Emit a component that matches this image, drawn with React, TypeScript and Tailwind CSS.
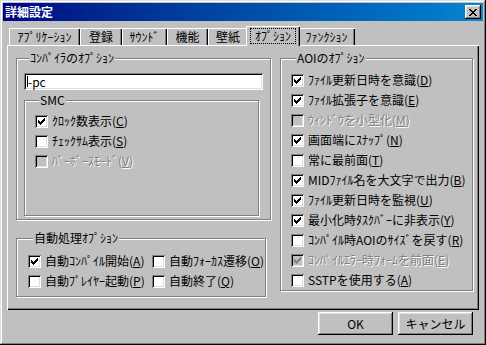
import React from "react";

function CheckMark({ color }: { color: string }) {
  const cols = [2, 3, 4, 3, 2, 1, 0];
  return (
    <svg width="7" height="7" viewBox="0 0 7 7" shapeRendering="crispEdges">
      {cols.map((y, x) => (
        <rect key={x} x={x} y={y} width="1" height="3" fill={color} />
      ))}
    </svg>
  );
}

function Box({ checked, disabled }: { checked?: boolean; disabled?: boolean }) {
  return (
    <span
      className={`shrink-0 w-[13px] h-[13px] flex items-center justify-center shadow-[inset_1px_1px_0_#808080,inset_-1px_-1px_0_#fff,inset_2px_2px_0_#000,inset_-2px_-2px_0_#dfdfdf] ${
        disabled ? "bg-[#c0c0c0]" : "bg-white"
      }`}
    >
      {checked ? <CheckMark color={disabled ? "#808080" : "#000"} /> : null}
    </span>
  );
}

function Label({ text, k, disabled }: { text: string; k: string; disabled?: boolean }) {
  return (
    <span
      className={`whitespace-nowrap ${
        disabled ? "text-[#808080] [text-shadow:1px_1px_0_#fff]" : "text-black"
      }`}
    >
      {text}(<span className="underline underline-offset-[1px]">{k}</span>)
    </span>
  );
}

function Row({
  text,
  k,
  checked,
  disabled,
}: {
  text: string;
  k: string;
  checked?: boolean;
  disabled?: boolean;
}) {
  return (
    <div className="h-[20px] flex items-center gap-[4px]">
      <Box checked={checked} disabled={disabled} />
      <Label text={text} k={k} disabled={disabled} />
    </div>
  );
}

function Tab({ label, w }: { label: string; w: string }) {
  return (
    <div
      className={`${w} h-[17px] shrink-0 flex items-center justify-center bg-[#c0c0c0] shadow-[inset_1px_1px_0_#fff,inset_-1px_0_0_#000,inset_-2px_0_0_#808080] whitespace-nowrap`}
    >
      {label}
    </div>
  );
}

export default function App() {
  return (
    <div className="w-[486px] h-[345px] bg-[#c0c0c0] p-[3px] flex flex-col shadow-[inset_-1px_-1px_0_#000,inset_1px_1px_0_#dfdfdf,inset_-2px_-2px_0_#808080,inset_2px_2px_0_#fff] font-['Noto_Sans_CJK_JP','Noto_Sans',sans-serif] text-[12px] leading-[14px] text-black overflow-hidden">
      {/* Title bar */}
      <div className="h-[18px] shrink-0 flex items-start justify-between bg-linear-to-r from-[#000080] to-[#1084d0]">
        <span className="text-white font-bold text-[12px] leading-[18px] pl-[2px]">
          詳細設定
        </span>
        <div className="mt-[2px] mr-[2px] w-[16px] h-[14px] bg-[#c0c0c0] flex items-center justify-center shadow-[inset_-1px_-1px_0_#000,inset_1px_1px_0_#fff,inset_-2px_-2px_0_#808080,inset_2px_2px_0_#dfdfdf]">
          <svg width="8" height="7" viewBox="0 0 8 7" shapeRendering="crispEdges">
            {[
              [0, 0], [1, 0], [6, 0], [7, 0],
              [1, 1], [2, 1], [5, 1], [6, 1],
              [2, 2], [3, 2], [4, 2], [5, 2],
              [3, 3], [4, 3],
              [2, 4], [3, 4], [4, 4], [5, 4],
              [1, 5], [2, 5], [5, 5], [6, 5],
              [0, 6], [1, 6], [6, 6], [7, 6],
            ].map(([x, y], i) => (
              <rect key={i} x={x} y={y} width="1" height="1" fill="#000" />
            ))}
          </svg>
        </div>
      </div>

      {/* Tabs */}
      <div className="h-[24px] shrink-0 flex items-end pl-[6px]">
        <Tab label="ｱﾌﾟﾘｹｰｼｮﾝ" w="w-[71px]" />
        <Tab label="登録" w="w-[42px]" />
        <Tab label="ｻｳﾝﾄﾞ" w="w-[45px]" />
        <Tab label="機能" w="w-[41px]" />
        <Tab label="壁紙" w="w-[40px]" />
        <div className="relative z-10 -mx-[2px] mb-[-1px] w-[54px] h-[20px] shrink-0 bg-[#c0c0c0] flex items-start justify-center pt-[2px] shadow-[inset_1px_1px_0_#fff,inset_-1px_0_0_#000,inset_-2px_0_0_#808080]">
          <span className="w-[46px] h-[16px] border border-dotted border-black flex items-center justify-center whitespace-nowrap">
            ｵﾌﾟｼｮﾝ
          </span>
        </div>
        <Tab label="ﾌｧﾝｸｼｮﾝ" w="w-[57px]" />
      </div>

      {/* Panel */}
      <div className="ml-[4px] w-[472px] h-[265px] shrink-0 flex gap-[14px] pl-[9px] pt-[6px] shadow-[inset_1px_1px_0_#fff,inset_-1px_-1px_0_#000,inset_-2px_-2px_0_#808080]">
        {/* Left column */}
        <div className="w-[250px] flex flex-col">
          <fieldset className="w-[250px] h-[169px] border border-[#808080] shadow-[inset_1px_1px_0_#fff,1px_1px_0_#fff] px-[7px]">
            <legend className="ml-[5px] px-[1px] bg-[#c0c0c0] leading-[14px] whitespace-nowrap">
              ｺﾝﾊﾟｲﾗのｵﾌﾟｼｮﾝ
            </legend>
            <div className="mt-[8px] w-[239px] h-[17px] bg-white flex items-center pl-[3px] shadow-[inset_1px_1px_0_#808080,inset_-1px_-1px_0_#fff,inset_2px_2px_0_#000,inset_-2px_-2px_0_#dfdfdf]">
              <span className="w-[1px] h-[11px] bg-black" />
              <span>-pc</span>
            </div>
            <fieldset className="mt-[3px] w-[235px] h-[123px] border border-[#808080] shadow-[inset_1px_1px_0_#fff,1px_1px_0_#fff] pl-[10px] pt-[4px]">
              <legend className="ml-[4px] px-[1px] bg-[#c0c0c0] leading-[14px]">SMC</legend>
              <Row text="ｸﾛｯｸ数表示" k="C" checked />
              <Row text="ﾁｪｯｸｻﾑ表示" k="S" />
              <Row text="ﾊﾞｰﾎﾞｰｽﾓｰﾄﾞ" k="V" disabled />
            </fieldset>
          </fieldset>

          <fieldset className="mt-[11px] w-[250px] h-[66px] border border-[#808080] shadow-[inset_1px_1px_0_#fff,1px_1px_0_#fff] pl-[11px] pt-[6px]">
            <legend className="ml-[5px] px-[1px] bg-[#c0c0c0] leading-[14px] whitespace-nowrap">
              自動処理ｵﾌﾟｼｮﾝ
            </legend>
            <div className="grid grid-cols-[124px_1fr]">
              <Row text="自動ｺﾝﾊﾟｲﾙ開始" k="A" checked />
              <Row text="自動ﾌｫｰｶｽ遷移" k="O" />
              <Row text="自動ﾌﾟﾚｲﾔｰ起動" k="P" />
              <Row text="自動終了" k="Q" />
            </div>
          </fieldset>
        </div>

        {/* Right column */}
        <fieldset className="w-[193px] h-[240px] border border-[#808080] shadow-[inset_1px_1px_0_#fff,1px_1px_0_#fff] pl-[10px] pt-[5px]">
          <legend className="ml-[5px] px-[1px] bg-[#c0c0c0] leading-[14px] whitespace-nowrap">
            AOIのｵﾌﾟｼｮﾝ
          </legend>
          <Row text="ﾌｧｲﾙ更新日時を意識" k="D" checked />
          <Row text="ﾌｧｲﾙ拡張子を意識" k="E" checked />
          <Row text="ｳｨﾝﾄﾞｳを小型化" k="M" disabled />
          <Row text="画面端にｽﾅｯﾌﾟ" k="N" checked />
          <Row text="常に最前面" k="T" />
          <Row text="MIDﾌｧｲﾙ名を大文字で出力" k="B" checked />
          <Row text="ﾌｧｲﾙ更新日時を監視" k="U" checked />
          <Row text="最小化時ﾀｽｸﾊﾞｰに非表示" k="Y" checked />
          <Row text="ｺﾝﾊﾟｲﾙ時AOIのｻｲｽﾞを戻す" k="R" />
          <Row text="ｺﾝﾊﾟｲﾙｴﾗｰ時ﾌｫｰﾑを前面" k="E" checked disabled />
          <Row text="SSTPを使用する" k="A" />
        </fieldset>
      </div>

      {/* Buttons */}
      <div className="mt-[2px] flex justify-end gap-[5px] pr-[10px]">
        <div className="w-[75px] h-[23px] flex items-center justify-center shadow-[inset_-1px_-1px_0_#000,inset_1px_1px_0_#fff,inset_-2px_-2px_0_#808080,inset_2px_2px_0_#dfdfdf]">
          OK
        </div>
        <div className="w-[75px] h-[23px] flex items-center justify-center shadow-[inset_-1px_-1px_0_#000,inset_1px_1px_0_#fff,inset_-2px_-2px_0_#808080,inset_2px_2px_0_#dfdfdf]">
          キャンセル
        </div>
      </div>
    </div>
  );
}
